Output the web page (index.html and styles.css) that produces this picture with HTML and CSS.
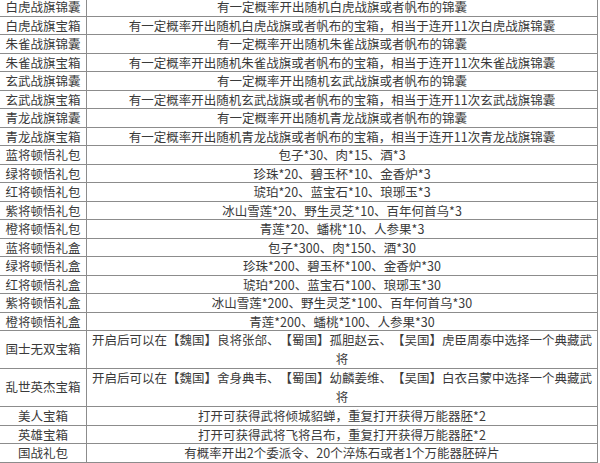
FILE: index.html
```html
<!DOCTYPE html>
<html lang="zh-CN">
<head>
<meta charset="utf-8">
<link rel="stylesheet" href="styles.css">
</head>
<body>
<table class="items">
<colgroup><col class="c-name"><col class="c-desc"></colgroup>
<tbody>
<tr><td>白虎战旗锦囊</td><td>有一定概率开出随机白虎战旗或者帆布的锦囊</td></tr>
<tr><td>白虎战旗宝箱</td><td>有一定概率开出随机白虎战旗或者帆布的宝箱，相当于连开11次白虎战旗锦囊</td></tr>
<tr><td>朱雀战旗锦囊</td><td>有一定概率开出随机朱雀战旗或者帆布的锦囊</td></tr>
<tr><td>朱雀战旗宝箱</td><td>有一定概率开出随机朱雀战旗或者帆布的宝箱，相当于连开11次朱雀战旗锦囊</td></tr>
<tr><td>玄武战旗锦囊</td><td>有一定概率开出随机玄武战旗或者帆布的锦囊</td></tr>
<tr><td>玄武战旗宝箱</td><td>有一定概率开出随机玄武战旗或者帆布的宝箱，相当于连开11次玄武战旗锦囊</td></tr>
<tr><td>青龙战旗锦囊</td><td>有一定概率开出随机青龙战旗或者帆布的锦囊</td></tr>
<tr><td>青龙战旗宝箱</td><td>有一定概率开出随机青龙战旗或者帆布的宝箱，相当于连开11次青龙战旗锦囊</td></tr>
<tr><td>蓝将顿悟礼包</td><td>包子*30、肉*15、酒*3</td></tr>
<tr><td>绿将顿悟礼包</td><td>珍珠*20、碧玉杯*10、金香炉*3</td></tr>
<tr><td>红将顿悟礼包</td><td>琥珀*20、蓝宝石*10、琅琊玉*3</td></tr>
<tr><td>紫将顿悟礼包</td><td>冰山雪莲*20、野生灵芝*10、百年何首乌*3</td></tr>
<tr><td>橙将顿悟礼包</td><td>青莲*20、蟠桃*10、人参果*3</td></tr>
<tr><td>蓝将顿悟礼盒</td><td>包子*300、肉*150、酒*30</td></tr>
<tr><td>绿将顿悟礼盒</td><td>珍珠*200、碧玉杯*100、金香炉*30</td></tr>
<tr><td>红将顿悟礼盒</td><td>琥珀*200、蓝宝石*100、琅琊玉*30</td></tr>
<tr><td>紫将顿悟礼盒</td><td>冰山雪莲*200、野生灵芝*100、百年何首乌*30</td></tr>
<tr><td>橙将顿悟礼盒</td><td>青莲*200、蟠桃*100、人参果*30</td></tr>
<tr class="tall"><td>国士无双宝箱</td><td>开启后可以在【魏国】良将张郃、【蜀国】孤胆赵云、【吴国】虎臣周泰中选择一个典藏武将</td></tr>
<tr class="tall"><td>乱世英杰宝箱</td><td>开启后可以在【魏国】舍身典韦、【蜀国】幼麟姜维、【吴国】白衣吕蒙中选择一个典藏武将</td></tr>
<tr><td>美人宝箱</td><td>打开可获得武将倾城貂蝉，重复打开获得万能器胚*2</td></tr>
<tr><td>英雄宝箱</td><td>打开可获得武将飞将吕布，重复打开获得万能器胚*2</td></tr>
<tr><td>国战礼包</td><td>有概率开出2个委派令、20个淬炼石或者1个万能器胚碎片</td></tr>
</tbody>
</table>
</body>
</html>
```

FILE: styles.css
```css
html, body {
  margin: 0;
  padding: 0;
  background: #ffffff;
  overflow: hidden;
}

.items {
  border-collapse: collapse;
  table-layout: fixed;
  width: 599px;
  margin: -3px 0 0 -1px;
  font-family: "Noto Sans CJK SC", "Microsoft YaHei", sans-serif;
  font-size: 12.5px;
  color: #3a3a3a;
  text-spacing-trim: space-all;
}

.c-name {
  width: 87px;
}

.items td {
  border: 1px solid #8c8c8c;
  padding: 0 2px;
  line-height: 17.5px;
  text-align: center;
  vertical-align: middle;
  white-space: normal;
}

.items tr.tall td {
  line-height: 18.5px;
}
```
